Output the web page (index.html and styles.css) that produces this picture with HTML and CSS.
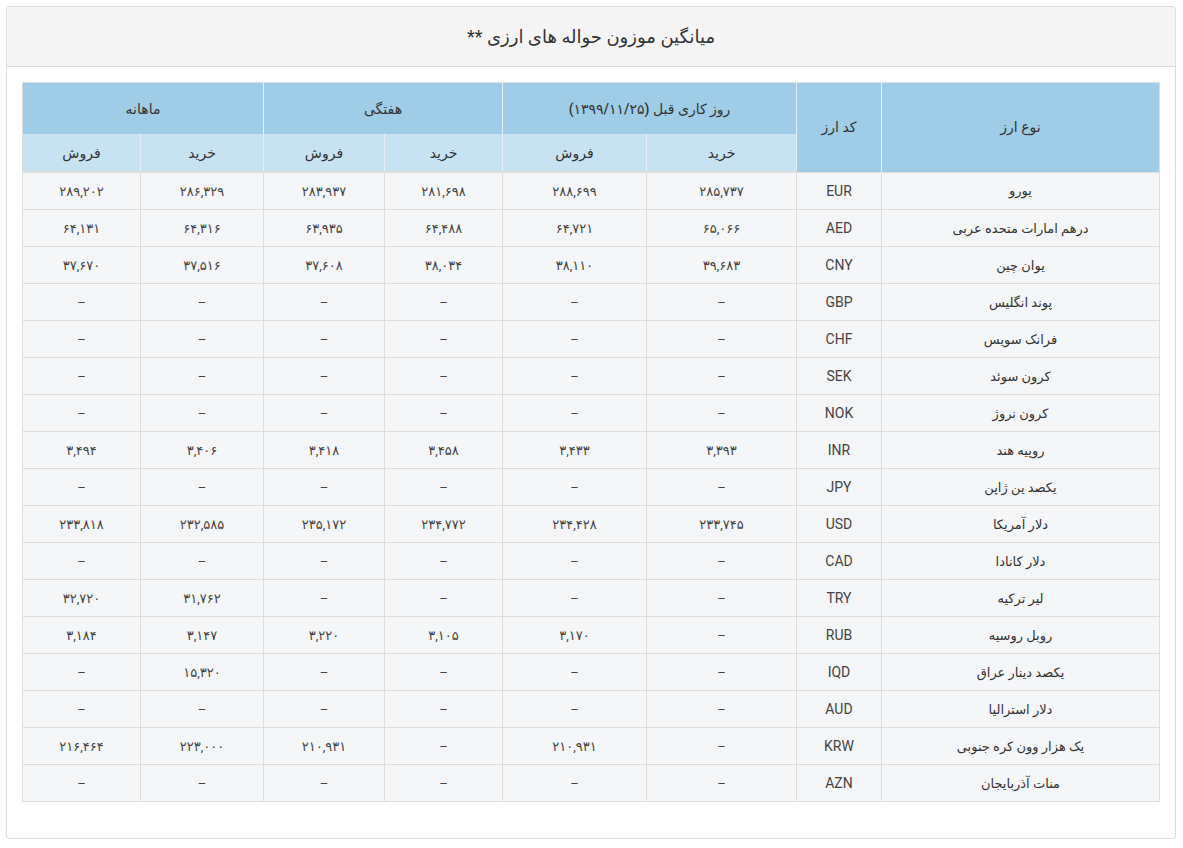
FILE: index.html
```html
<!DOCTYPE html>
<html lang="fa" dir="rtl">
<head>
<meta charset="utf-8">
<title>میانگین موزون حواله های ارزی</title>
<link rel="stylesheet" href="styles.css">
</head>
<body>
<div class="panel">
  <div class="panel-heading">میانگین موزون حواله های ارزی **</div>
  <div class="panel-body">
    <table class="rates">
      <colgroup>
        <col class="c-name"><col class="c-code"><col class="c-d1"><col class="c-d2"><col class="c-w1"><col class="c-w2"><col class="c-m1"><col class="c-m2">
      </colgroup>
      <thead>
        <tr class="h1">
          <th rowspan="2" class="dark">نوع ارز</th>
          <th rowspan="2" class="dark">کد ارز</th>
          <th colspan="2" class="dark">روز کاری قبل (۱۳۹۹/۱۱/۲۵)</th>
          <th colspan="2" class="dark">هفتگی</th>
          <th colspan="2" class="dark">ماهانه</th>
        </tr>
        <tr class="h2">
          <th>خرید</th><th>فروش</th><th>خرید</th><th>فروش</th><th>خرید</th><th>فروش</th>
        </tr>
      </thead>
      <tbody>
        <tr><td>یورو</td><td class="code">EUR</td><td>۲۸۵,۷۳۷</td><td>۲۸۸,۶۹۹</td><td>۲۸۱,۶۹۸</td><td>۲۸۳,۹۳۷</td><td>۲۸۶,۳۲۹</td><td>۲۸۹,۲۰۲</td></tr>
        <tr><td>درهم امارات متحده عربی</td><td class="code">AED</td><td>۶۵,۰۶۶</td><td>۶۴,۷۲۱</td><td>۶۴,۴۸۸</td><td>۶۳,۹۳۵</td><td>۶۴,۳۱۶</td><td>۶۴,۱۳۱</td></tr>
        <tr><td>یوان چین</td><td class="code">CNY</td><td>۳۹,۶۸۳</td><td>۳۸,۱۱۰</td><td>۳۸,۰۳۴</td><td>۳۷,۶۰۸</td><td>۳۷,۵۱۶</td><td>۳۷,۶۷۰</td></tr>
        <tr><td>پوند انگلیس</td><td class="code">GBP</td><td>–</td><td>–</td><td>–</td><td>–</td><td>–</td><td>–</td></tr>
        <tr><td>فرانک سویس</td><td class="code">CHF</td><td>–</td><td>–</td><td>–</td><td>–</td><td>–</td><td>–</td></tr>
        <tr><td>کرون سوئد</td><td class="code">SEK</td><td>–</td><td>–</td><td>–</td><td>–</td><td>–</td><td>–</td></tr>
        <tr><td>کرون نروژ</td><td class="code">NOK</td><td>–</td><td>–</td><td>–</td><td>–</td><td>–</td><td>–</td></tr>
        <tr><td>روپیه هند</td><td class="code">INR</td><td>۳,۳۹۳</td><td>۳,۴۳۳</td><td>۳,۴۵۸</td><td>۳,۴۱۸</td><td>۳,۴۰۶</td><td>۳,۴۹۴</td></tr>
        <tr><td>یکصد ین ژاپن</td><td class="code">JPY</td><td>–</td><td>–</td><td>–</td><td>–</td><td>–</td><td>–</td></tr>
        <tr><td>دلار آمریکا</td><td class="code">USD</td><td>۲۳۳,۷۴۵</td><td>۲۳۴,۴۲۸</td><td>۲۳۴,۷۷۲</td><td>۲۳۵,۱۷۲</td><td>۲۳۲,۵۸۵</td><td>۲۳۳,۸۱۸</td></tr>
        <tr><td>دلار کانادا</td><td class="code">CAD</td><td>–</td><td>–</td><td>–</td><td>–</td><td>–</td><td>–</td></tr>
        <tr><td>لیر ترکیه</td><td class="code">TRY</td><td>–</td><td>–</td><td>–</td><td>–</td><td>۳۱,۷۶۲</td><td>۳۲,۷۲۰</td></tr>
        <tr><td>روبل روسیه</td><td class="code">RUB</td><td>–</td><td>۳,۱۷۰</td><td>۳,۱۰۵</td><td>۳,۲۲۰</td><td>۳,۱۴۷</td><td>۳,۱۸۴</td></tr>
        <tr><td>یکصد دینار عراق</td><td class="code">IQD</td><td>–</td><td>–</td><td>–</td><td>–</td><td>۱۵,۳۲۰</td><td>–</td></tr>
        <tr><td>دلار استرالیا</td><td class="code">AUD</td><td>–</td><td>–</td><td>–</td><td>–</td><td>–</td><td>–</td></tr>
        <tr><td>یک هزار وون کره جنوبی</td><td class="code">KRW</td><td>–</td><td>۲۱۰,۹۳۱</td><td>–</td><td>۲۱۰,۹۳۱</td><td>۲۲۳,۰۰۰</td><td>۲۱۶,۴۶۴</td></tr>
        <tr><td>منات آذربایجان</td><td class="code">AZN</td><td>–</td><td>–</td><td>–</td><td>–</td><td>–</td><td>–</td></tr>
      </tbody>
    </table>
  </div>
</div>
</body>
</html>
```

FILE: styles.css
```css
html, body {
  margin: 0;
  padding: 0;
  background: #ffffff;
}
body {
  padding: 6px 7px 0 6px;
  font-family: Roboto, "DejaVu Sans", sans-serif;
  font-size: 14px;
  color: #333333;
}
.panel {
  border: 1px solid #dddddd;
  border-radius: 4px;
  background: #ffffff;
  box-shadow: 0 1px 1px rgba(0,0,0,0.05);
}
.panel-heading {
  height: 59px;
  background: #f5f5f5;
  border-bottom: 1px solid #dddddd;
  border-radius: 3px 3px 0 0;
  display: flex;
  align-items: center;
  justify-content: center;
  font-size: 18px;
  color: #333333;
}
.panel-body {
  padding: 15px 15px 36px 15px;
}
.rates {
  width: 1137px;
  table-layout: fixed;
  border-collapse: collapse;
  border: 1px solid #dddddd;
  background: #f5f6f7;
}
.c-name { width: 278px; }
.c-code { width: 85px; }
.c-d1 { width: 150px; }
.c-d2 { width: 144px; }
.c-w1 { width: 118px; }
.c-w2 { width: 121px; }
.c-m1 { width: 123px; }
.c-m2 { width: 118px; }
.rates th {
  font-weight: 500;
  font-size: 14px;
  color: #333333;
  text-align: center;
  padding: 0 8px;
  border-left: 1px solid #e3eef5;
}
.rates th:last-child {
  border-left: none;
}
.rates .h1 th {
  height: 51px;
  background: #9fcce6;
}
.rates .h2 th {
  height: 37px;
  background: #c7e2f1;
  border-bottom: 2px solid #dddddd;
}
.rates td {
  height: 36px;
  padding: 0 8px;
  text-align: center;
  border: 1px solid #dddddd;
  font-size: 13px;
  color: #444444;
}
.rates td:first-child {
  font-size: 13px;
  color: #333333;
}
.rates td.code {
  font-size: 14px;
  color: #444444;
}
```
